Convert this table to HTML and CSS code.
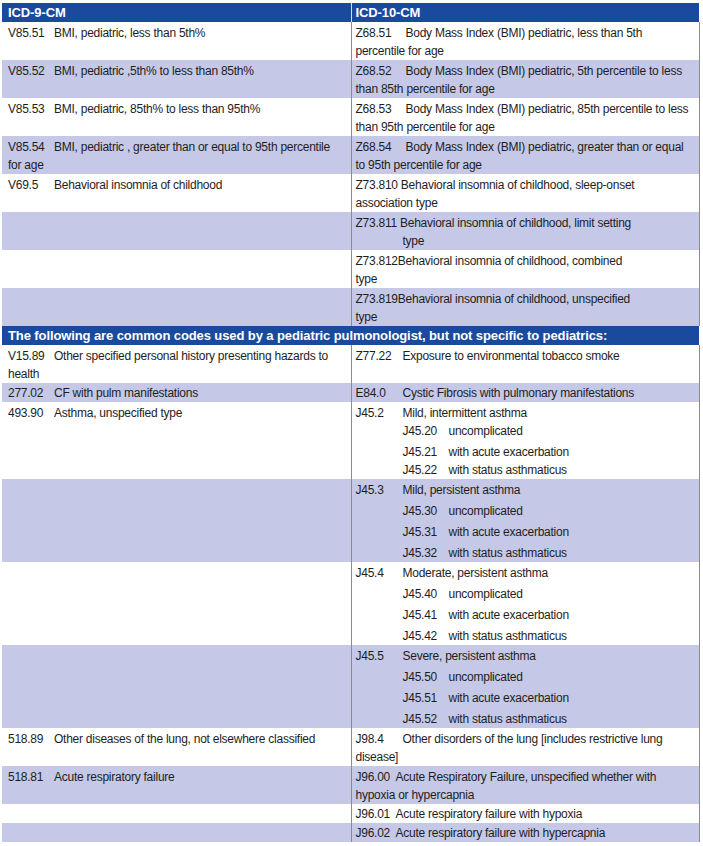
FILE: index.html
```html
<!DOCTYPE html>
<html>
<head>
<meta charset="utf-8">
<link rel="stylesheet" href="styles.css">
</head>
<body>
<table class="codes">
  <colgroup><col class="col-l"><col class="col-r"></colgroup>
  <tr class="head single">
    <th class="l">ICD-9-CM</th>
    <th class="r">ICD-10-CM</th>
  </tr>
  <tr>
    <td class="l"><span class="cl">V85.51</span>BMI, pediatric, less than 5th%</td>
    <td class="r"><span class="cw">Z68.51</span>Body Mass Index (BMI) pediatric, less than 5th<br>percentile for age</td>
  </tr>
  <tr class="alt">
    <td class="l"><span class="cl">V85.52</span>BMI, pediatric ,5th% to less than 85th%</td>
    <td class="r"><span class="cw">Z68.52</span>Body Mass Index (BMI) pediatric, 5th percentile to less<br>than 85th percentile for age</td>
  </tr>
  <tr>
    <td class="l"><span class="cl">V85.53</span>BMI, pediatric, 85th% to less than 95th%</td>
    <td class="r"><span class="cw">Z68.53</span>Body Mass Index (BMI) pediatric, 85th percentile to less<br>than 95th percentile for age</td>
  </tr>
  <tr class="alt">
    <td class="l"><span class="cl">V85.54</span>BMI, pediatric , greater than or equal to 95th percentile<br>for age</td>
    <td class="r"><span class="cw">Z68.54</span>Body Mass Index (BMI) pediatric, greater than or equal<br>to 95th percentile for age</td>
  </tr>
  <tr>
    <td class="l"><span class="cl">V69.5</span>Behavioral insomnia of childhood</td>
    <td class="r">Z73.810 Behavioral insomnia of childhood, sleep-onset<br>association type</td>
  </tr>
  <tr class="alt">
    <td class="l"></td>
    <td class="r">Z73.811 Behavioral insomnia of childhood, limit setting<br><span class="indent">type</span></td>
  </tr>
  <tr>
    <td class="l"></td>
    <td class="r">Z73.812Behavioral insomnia of childhood, combined<br>type</td>
  </tr>
  <tr class="alt">
    <td class="l"></td>
    <td class="r">Z73.819Behavioral insomnia of childhood, unspecified<br>type</td>
  </tr>
  <tr class="head single">
    <th class="span" colspan="2">The following are common codes used by a pediatric pulmonologist, but not specific to pediatrics:</th>
  </tr>
  <tr>
    <td class="l"><span class="cl">V15.89</span>Other specified personal history presenting hazards to<br>health</td>
    <td class="r"><span class="cr">Z77.22</span>Exposure to environmental tobacco smoke</td>
  </tr>
  <tr class="alt single">
    <td class="l"><span class="cl">277.02</span>CF with pulm manifestations</td>
    <td class="r"><span class="cr">E84.0</span>Cystic Fibrosis with pulmonary manifestations</td>
  </tr>
  <tr>
    <td class="l"><span class="cl">493.90</span>Asthma, unspecified type</td>
    <td class="r">
      <div><span class="cr">J45.2</span>Mild, intermittent asthma</div>
      <div class="sub"><span class="cs">J45.20</span>uncomplicated</div>
      <div class="sub gap"><span class="cs">J45.21</span>with acute exacerbation</div>
      <div class="sub"><span class="cs">J45.22</span>with status asthmaticus</div>
    </td>
  </tr>
  <tr class="alt">
    <td class="l"></td>
    <td class="r">
      <div><span class="cr">J45.3</span>Mild, persistent asthma</div>
      <div class="sub gap"><span class="cs">J45.30</span>uncomplicated</div>
      <div class="sub gap"><span class="cs">J45.31</span>with acute exacerbation</div>
      <div class="sub gap"><span class="cs">J45.32</span>with status asthmaticus</div>
    </td>
  </tr>
  <tr>
    <td class="l"></td>
    <td class="r">
      <div><span class="cr">J45.4</span>Moderate, persistent asthma</div>
      <div class="sub gap"><span class="cs">J45.40</span>uncomplicated</div>
      <div class="sub gap"><span class="cs">J45.41</span>with acute exacerbation</div>
      <div class="sub gap"><span class="cs">J45.42</span>with status asthmaticus</div>
    </td>
  </tr>
  <tr class="alt">
    <td class="l"></td>
    <td class="r">
      <div><span class="cr">J45.5</span>Severe, persistent asthma</div>
      <div class="sub gap"><span class="cs">J45.50</span>uncomplicated</div>
      <div class="sub gap"><span class="cs">J45.51</span>with acute exacerbation</div>
      <div class="sub gap"><span class="cs">J45.52</span>with status asthmaticus</div>
    </td>
  </tr>
  <tr>
    <td class="l"><span class="cl">518.89</span>Other diseases of the lung, not elsewhere classified</td>
    <td class="r"><span class="cr">J98.4</span>Other disorders of the lung [includes restrictive lung<br>disease]</td>
  </tr>
  <tr class="alt">
    <td class="l"><span class="cl">518.81</span>Acute respiratory failure</td>
    <td class="r"><span class="cn">J96.00</span>Acute Respiratory Failure, unspecified whether with<br>hypoxia or hypercapnia</td>
  </tr>
  <tr class="single">
    <td class="l"></td>
    <td class="r"><span class="cn">J96.01</span>Acute respiratory failure with hypoxia</td>
  </tr>
  <tr class="alt single">
    <td class="l"></td>
    <td class="r"><span class="cn">J96.02</span>Acute respiratory failure with hypercapnia</td>
  </tr>
</table>
</body>
</html>
```

FILE: styles.css
```css
html, body {
  margin: 0;
  padding: 0;
  background: #ffffff;
}

body {
  font-family: "Liberation Sans", Arial, sans-serif;
  font-size: 12px;
  letter-spacing: -0.25px;
  color: #1e1e1e;
}

.codes {
  border-collapse: collapse;
  table-layout: fixed;
  width: 697px;
  margin: 3px 0 0 2px;
}

.col-l { width: 349px; }
.col-r { width: 348px; }

.codes th,
.codes td {
  text-align: left;
  vertical-align: top;
  line-height: 18px;
  padding: 2px 4px 0 6px;
  white-space: nowrap;
}

.codes td.r {
  border-left: 1px solid #8c8c8c;
  border-right: 1px solid #8c8c8c;
  padding-left: 4px;
}

.codes tr.single th,
.codes tr.single td {
  padding-top: 1px;
}

.codes .head th {
  background: #1a4a9e;
  color: #ffffff;
  font-size: 13px;
  letter-spacing: -0.1px;
  font-weight: bold;
  line-height: 18px;
}

.codes .head th.r {
  border-left: 1px solid #d8ddee;
  padding-left: 4px;
}

.codes tr.alt td {
  background: #c5c8e6;
}

.cl {
  display: inline-block;
  width: 46px;
}

.cr {
  display: inline-block;
  width: 47px;
}

.cw {
  display: inline-block;
  width: 50px;
}

.cn {
  display: inline-block;
  width: 40px;
}

.cs {
  display: inline-block;
  width: 46px;
}

.sub {
  margin-left: 47px;
}

.sub.gap {
  margin-top: 3px;
}

.indent {
  padding-left: 47px;
}
```
